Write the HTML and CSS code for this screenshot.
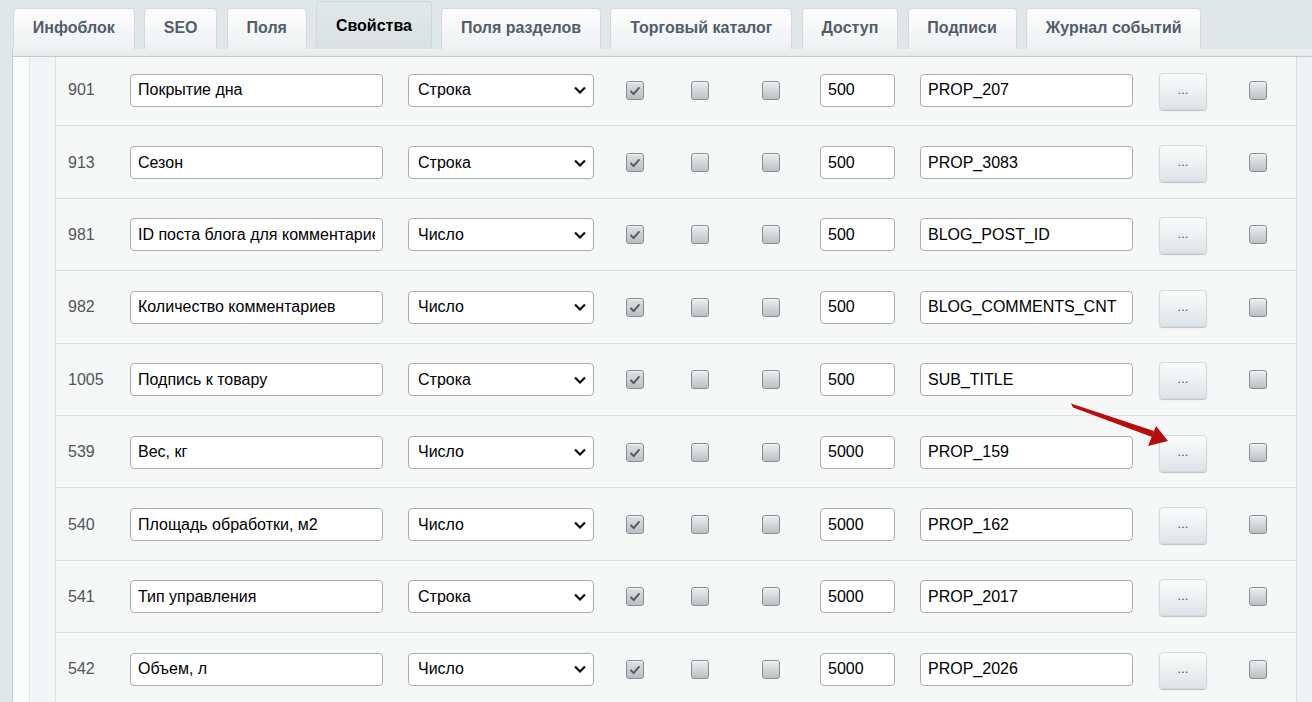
FILE: index.html
```html
<!DOCTYPE html>
<html lang="ru">
<head>
<meta charset="utf-8">
<title>Свойства</title>
<link rel="stylesheet" href="styles.css">
</head>
<body>
<div class="tabs">
  <div class="tab">Инфоблок</div>
  <div class="tab">SEO</div>
  <div class="tab">Поля</div>
  <div class="tab active">Свойства</div>
  <div class="tab">Поля разделов</div>
  <div class="tab">Торговый каталог</div>
  <div class="tab">Доступ</div>
  <div class="tab">Подписи</div>
  <div class="tab">Журнал событий</div>
</div>
<div class="main">
  <div class="band"></div>
  <div class="panel">
    <div class="strip1"></div>
    <div class="strip2"></div>
    <div class="rows">
      <div class="list">
        <div class="row"><span class="id">901</span><input class="name" type="text" value="Покрытие дна"><div class="sel"><span>Строка</span><svg width="12" height="8" viewBox="0 0 12 8"><path d="M1 1.5 L6 6.5 L11 1.5" fill="none" stroke="#111" stroke-width="2.2"/></svg></div><span class="cb on"><svg viewBox="0 0 18 18"><path d="M4 9.5 L7.5 13 L14 5.5" fill="none" stroke="#575c61" stroke-width="2.2"/></svg></span><span class="cb"></span><span class="cb"></span><input class="sort" type="text" value="500"><input class="code" type="text" value="PROP_207"><button class="more">...</button><span class="cb"></span></div>
        <div class="row"><span class="id">913</span><input class="name" type="text" value="Сезон"><div class="sel"><span>Строка</span><svg width="12" height="8" viewBox="0 0 12 8"><path d="M1 1.5 L6 6.5 L11 1.5" fill="none" stroke="#111" stroke-width="2.2"/></svg></div><span class="cb on"><svg viewBox="0 0 18 18"><path d="M4 9.5 L7.5 13 L14 5.5" fill="none" stroke="#575c61" stroke-width="2.2"/></svg></span><span class="cb"></span><span class="cb"></span><input class="sort" type="text" value="500"><input class="code" type="text" value="PROP_3083"><button class="more">...</button><span class="cb"></span></div>
        <div class="row"><span class="id">981</span><input class="name" type="text" value="ID поста блога для комментариев"><div class="sel"><span>Число</span><svg width="12" height="8" viewBox="0 0 12 8"><path d="M1 1.5 L6 6.5 L11 1.5" fill="none" stroke="#111" stroke-width="2.2"/></svg></div><span class="cb on"><svg viewBox="0 0 18 18"><path d="M4 9.5 L7.5 13 L14 5.5" fill="none" stroke="#575c61" stroke-width="2.2"/></svg></span><span class="cb"></span><span class="cb"></span><input class="sort" type="text" value="500"><input class="code" type="text" value="BLOG_POST_ID"><button class="more">...</button><span class="cb"></span></div>
        <div class="row"><span class="id">982</span><input class="name" type="text" value="Количество комментариев"><div class="sel"><span>Число</span><svg width="12" height="8" viewBox="0 0 12 8"><path d="M1 1.5 L6 6.5 L11 1.5" fill="none" stroke="#111" stroke-width="2.2"/></svg></div><span class="cb on"><svg viewBox="0 0 18 18"><path d="M4 9.5 L7.5 13 L14 5.5" fill="none" stroke="#575c61" stroke-width="2.2"/></svg></span><span class="cb"></span><span class="cb"></span><input class="sort" type="text" value="500"><input class="code" type="text" value="BLOG_COMMENTS_CNT"><button class="more">...</button><span class="cb"></span></div>
        <div class="row"><span class="id">1005</span><input class="name" type="text" value="Подпись к товару"><div class="sel"><span>Строка</span><svg width="12" height="8" viewBox="0 0 12 8"><path d="M1 1.5 L6 6.5 L11 1.5" fill="none" stroke="#111" stroke-width="2.2"/></svg></div><span class="cb on"><svg viewBox="0 0 18 18"><path d="M4 9.5 L7.5 13 L14 5.5" fill="none" stroke="#575c61" stroke-width="2.2"/></svg></span><span class="cb"></span><span class="cb"></span><input class="sort" type="text" value="500"><input class="code" type="text" value="SUB_TITLE"><button class="more">...</button><span class="cb"></span></div>
        <div class="row"><span class="id">539</span><input class="name" type="text" value="Вес, кг"><div class="sel"><span>Число</span><svg width="12" height="8" viewBox="0 0 12 8"><path d="M1 1.5 L6 6.5 L11 1.5" fill="none" stroke="#111" stroke-width="2.2"/></svg></div><span class="cb on"><svg viewBox="0 0 18 18"><path d="M4 9.5 L7.5 13 L14 5.5" fill="none" stroke="#575c61" stroke-width="2.2"/></svg></span><span class="cb"></span><span class="cb"></span><input class="sort" type="text" value="5000"><input class="code" type="text" value="PROP_159"><button class="more">...</button><span class="cb"></span></div>
        <div class="row"><span class="id">540</span><input class="name" type="text" value="Площадь обработки, м2"><div class="sel"><span>Число</span><svg width="12" height="8" viewBox="0 0 12 8"><path d="M1 1.5 L6 6.5 L11 1.5" fill="none" stroke="#111" stroke-width="2.2"/></svg></div><span class="cb on"><svg viewBox="0 0 18 18"><path d="M4 9.5 L7.5 13 L14 5.5" fill="none" stroke="#575c61" stroke-width="2.2"/></svg></span><span class="cb"></span><span class="cb"></span><input class="sort" type="text" value="5000"><input class="code" type="text" value="PROP_162"><button class="more">...</button><span class="cb"></span></div>
        <div class="row"><span class="id">541</span><input class="name" type="text" value="Тип управления"><div class="sel"><span>Строка</span><svg width="12" height="8" viewBox="0 0 12 8"><path d="M1 1.5 L6 6.5 L11 1.5" fill="none" stroke="#111" stroke-width="2.2"/></svg></div><span class="cb on"><svg viewBox="0 0 18 18"><path d="M4 9.5 L7.5 13 L14 5.5" fill="none" stroke="#575c61" stroke-width="2.2"/></svg></span><span class="cb"></span><span class="cb"></span><input class="sort" type="text" value="5000"><input class="code" type="text" value="PROP_2017"><button class="more">...</button><span class="cb"></span></div>
        <div class="row"><span class="id">542</span><input class="name" type="text" value="Объем, л"><div class="sel"><span>Число</span><svg width="12" height="8" viewBox="0 0 12 8"><path d="M1 1.5 L6 6.5 L11 1.5" fill="none" stroke="#111" stroke-width="2.2"/></svg></div><span class="cb on"><svg viewBox="0 0 18 18"><path d="M4 9.5 L7.5 13 L14 5.5" fill="none" stroke="#575c61" stroke-width="2.2"/></svg></span><span class="cb"></span><span class="cb"></span><input class="sort" type="text" value="5000"><input class="code" type="text" value="PROP_2026"><button class="more">...</button><span class="cb"></span></div>
      </div>
    </div>
    <div class="strip3"></div>
  </div>
</div>
<svg class="arrow" width="1312" height="702" viewBox="0 0 1312 702">
  <path d="M1071 403.5 L1073 407.5 L1152 437 L1154 431 Z" fill="#b80d0d"/>
  <path d="M1168 441 L1148 446 L1156 426 Z" fill="#b80d0d"/>
</svg>
</body>
</html>
```

FILE: styles.css
```css
* { box-sizing: border-box; }
html, body { margin: 0; height: 702px; overflow: hidden; }
body {
  background: #dfe7e9;
  font-family: "Liberation Sans", Arial, sans-serif;
  position: relative;
}
.tabs {
  display: flex;
  align-items: flex-end;
  height: 49px;
  padding-left: 13px;
  gap: 9.4px;
}
.tab {
  height: 41px;
  padding: 0 18.8px 3px;
  display: flex;
  align-items: center;
  font-size: 16px;
  font-weight: bold;
  color: #535c69;
  background: linear-gradient(#fdfdfd, #eef1f2);
  border: 1px solid #d3dadd;
  border-bottom: none;
  border-radius: 4px 4px 0 0;
}
.tab.active {
  height: 48px;
  color: #000;
  background: linear-gradient(#e2e8ea, #d9e1e3);
  border-color: #cfd7da;
  padding-bottom: 0;
}
.main {
  margin-left: 12px;
  border-left: 1px solid #c6ced1;
}
.band {
  height: 8px;
  background: linear-gradient(#eef1f2, #e5e9ea);
  border-bottom: 1px solid #c4cacd;
  box-shadow: 0 1px 1px rgba(0,0,0,0.06);
}
.panel {
  display: flex;
  height: 645px;
}
.strip1 {
  width: 17px;
  background: #fbfcfc;
  border-right: 1px solid #dfe4e6;
}
.strip2 {
  width: 26px;
  background: #f3f6f6;
  border-right: 1px solid #dde3e5;
}
.rows {
  flex: 0 0 1241px;
  background: #f6f8f8;
  border-right: 1px solid #d6dcdf;
  overflow: hidden;
}
.strip3 {
  flex: 1;
  background: #eef2f3;
}
.list {
  margin-top: -4px;
}
.row {
  height: 72.4px;
  border-top: 1px solid #d8dee1;
  display: grid;
  grid-template-columns: 62px 278px 218px 65px 71px 58px 100px 239px 90px 19px;
  align-items: center;
  padding: 1px 0 0 12px;
}
.row:first-child { border-top-color: transparent; }
.id {
  font-size: 16px;
  color: #505559;
}
input {
  height: 33px;
  border: 1px solid #a7adb3;
  border-radius: 4px;
  background: #fff;
  font-family: "Liberation Sans", Arial, sans-serif;
  font-size: 16px;
  color: #000;
  padding: 0 7px;
  margin: 0;
  outline: none;
}
.name { width: 253px; }
.sort { width: 75px; }
.code { width: 213px; }
.sel {
  width: 186px;
  height: 33px;
  border: 1px solid #a7adb3;
  border-radius: 4px;
  background: #fff;
  font-size: 16px;
  color: #000;
  display: flex;
  align-items: center;
  justify-content: space-between;
  padding: 0 7px 0 9px;
}
.sel svg { display: block; }
.cb {
  width: 18px;
  height: 19px;
  border: 1px solid #888d92;
  border-radius: 3px;
  background: linear-gradient(#eceeef, #bcc0c4);
  box-shadow: inset 0 1px 0 rgba(255,255,255,0.6);
  display: block;
}
.cb.on {
  background: linear-gradient(#dfe2e4, #b9bec2);
}
.cb svg { display: block; width: 16px; height: 17px; }
.more {
  width: 48px;
  height: 37px;
  margin: 2px 0 0;
  padding: 0 0 4px;
  border: 1px solid #d3dadd;
  border-radius: 4px;
  background: linear-gradient(#fbfcfc, #dde4e7);
  box-shadow: 0 1px 1px rgba(0,0,0,0.22);
  font-family: "Liberation Sans", Arial, sans-serif;
  font-size: 13px;
  color: #3f5470;
}
.arrow {
  position: absolute;
  left: 0;
  top: 0;
  pointer-events: none;
}
```
